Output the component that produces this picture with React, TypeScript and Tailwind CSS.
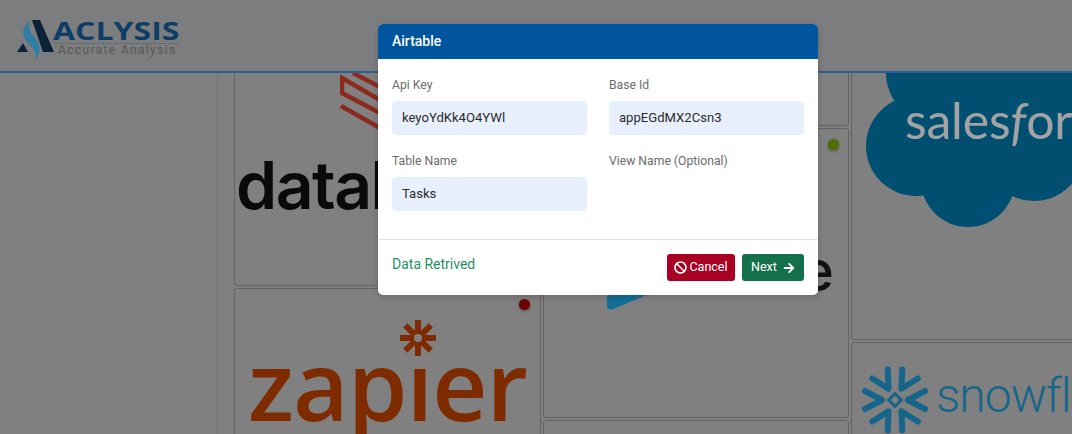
import { FaArrowRight, FaBan } from "react-icons/fa";

// Airtable connection dialog over the dimmed connector grid. Colours of the page
// behind the dialog are the already dimmed ones.

function Field({ label, value }: { label: string; value?: string }) {
  return (
    <div className="flex flex-col">
      <label className="h-[26px] text-[12.2px] leading-[20px] text-[#6c6c6c]">{label}</label>
      {value !== undefined && (
        <div className="flex h-[34px] items-center rounded-[4px] bg-[#e8f0fe] px-[10px] text-[13.1px] text-[#2b2b2b]">
          {value}
        </div>
      )}
    </div>
  );
}

function AclysisLogo() {
  return (
    <div className="flex items-start">
      <svg width="40" height="44" viewBox="0 0 40 44" className="-mr-[3px] shrink-0">
        <polygon points="1,34 12,34 7,25" fill="#0c2236" />
        <polygon points="16,2 24,2 38,34 27,34" fill="#0c2236" />
        <path d="M14,3 C7,8 5,15 10,22 C15,29 21,32 20,42 C24,36 25,30 22,24 C18,17 10,13 14,3 Z" fill="#2e7fa6" />
      </svg>
      <div className="flex w-[126px] flex-col">
        <span className="h-[25px] origin-left scale-x-[1.28] font-['Open_Sans',sans-serif] text-[25px] leading-[25px] font-bold text-[#0f3d66]">
          ACLYSIS
        </span>
        <span className="border-t border-[#6a6a6a] pl-[5px] font-['Roboto',sans-serif] text-[12px] leading-[13px] tracking-[1.35px] whitespace-nowrap text-[#585858]">
          Accurate Analysis
        </span>
      </div>
    </div>
  );
}

function Tile({ height, className = "", children }: { height: number; className?: string; children?: React.ReactNode }) {
  return (
    <div
      style={{ height }}
      className={`relative shrink-0 overflow-hidden rounded-[3px] border border-[#646464] ${className}`}
    >
      {children}
    </div>
  );
}

function Snowflake() {
  const arms = [30, 90, 150, 210, 270, 330];
  return (
    <svg width="68" height="68" viewBox="-34 -34 68 68" className="shrink-0">
      {arms.map((angle) => (
        <path
          key={angle}
          d="M-9,-30 L0,-13 L9,-30"
          transform={`rotate(${angle})`}
          stroke="#15668a"
          strokeWidth="6"
          strokeLinecap="round"
          strokeLinejoin="round"
          fill="none"
        />
      ))}
      <rect x="-4.5" y="-4.5" width="9" height="9" transform="rotate(45)" fill="none" stroke="#15668a" strokeWidth="3" />
    </svg>
  );
}

export default function App() {
  return (
    <div className="relative h-[434px] w-[1072px] overflow-hidden bg-[#808080] font-['Roboto',sans-serif]">
      <header className="flex h-[73px] items-start border-b-2 border-[#2a5f97] bg-[#7c7d7f] pt-[18px] pl-[16px]">
        <AclysisLogo />
      </header>

      <main className="flex h-[361px] overflow-hidden pl-[217px]">
        <div className="flex w-[17px] shrink-0 border-l border-[#747474]" />
        <div className="flex w-[309px] shrink-0 flex-col gap-[2px] pr-[2px]">
          <Tile height={213} className="rounded-t-none border-t-0">
            <svg width="60" height="60" viewBox="0 0 60 60" className="ml-[105px]" fill="none" stroke="#8c2a1e" strokeWidth="4.5">
              <path d="M13,0 L40,14" />
              <path d="M40,27 L2,5 L2,20 L40,40" />
              <path d="M1,33 L40,55" />
            </svg>
            <span className="absolute top-[72px] left-[1px] font-['Inter',sans-serif] text-[66px] leading-[80px] font-semibold tracking-[-1.5px] whitespace-nowrap text-[#0a0a0a]">
              datab
            </span>
          </Tile>
          <Tile height={160}>
            <div className="absolute top-[10px] right-[10px] h-[11px] w-[11px] rounded-full bg-[#6e0000] shadow-[0_1px_3px_rgba(0,0,0,0.4)]" />
            <div className="flex flex-col items-center pt-[31px]">
              <svg width="36" height="36" viewBox="-18 -18 36 36" className="ml-[60px]">
                {[0, 45, 90, 135].map((angle) => (
                  <rect key={angle} x="-3" y="-18" width="6" height="36" fill="#7f2b00" transform={`rotate(${angle})`} />
                ))}
                <circle r="4" fill="#808080" />
              </svg>
              <span className="-mt-[27px] font-['Open_Sans',sans-serif] text-[96px] leading-[110px] font-semibold tracking-[-1px] text-[#7f2b00]">
                zapıer
              </span>
            </div>
          </Tile>
        </div>

        <div className="-ml-[2px] flex w-[308px] shrink-0 flex-col gap-[2px] pl-[2px]">
          <Tile height={53} className="w-[306px] rounded-t-none border-t-0" />
          <Tile height={290} className="w-[306px]">
            <div className="absolute top-[10px] right-[9px] h-[11px] w-[11px] rounded-full bg-[#4f7000] shadow-[0_1px_3px_rgba(0,0,0,0.4)]" />
            <span className="absolute top-[109px] right-[14px] font-['Inter',sans-serif] text-[56px] leading-[66px] font-medium text-[#111]">
              e
            </span>
            <svg width="60" height="60" viewBox="0 0 60 60" className="absolute top-[123px] left-[61px]">
              <polygon points="2,45 2,56 6,58 44,42 30,10" fill="#146f96" />
            </svg>
          </Tile>
          <Tile height={30} className="w-[306px]" />
        </div>

        <div className="flex flex-1 flex-col gap-[2px] pl-[2px]">
          <Tile height={267} className="-mr-[4px] rounded-t-none border-t-0">
            <svg width="222" height="156" viewBox="0 0 222 156" className="absolute top-0 left-0">
              <g fill="#004f70">
                <circle cx="64" cy="73" r="50" />
                <circle cx="84" cy="0" r="50" />
                <circle cx="116" cy="107" r="47" />
                <circle cx="182" cy="78" r="50" />
                <rect x="70" y="0" width="152" height="110" />
              </g>
            </svg>
            <span className="absolute top-[12px] left-[53px] font-['Lato',sans-serif] text-[50px] leading-[70px] tracking-[-0.2px] whitespace-nowrap text-[#a3a3a3]">
              sales<em>f</em>or
            </span>
          </Tile>
          <Tile height={100} className="-mr-[4px] rounded-b-none">
            <div className="flex items-start gap-[7px] pt-[23px] pl-[9px]">
              <Snowflake />
              <span className="mt-[-3px] font-['Roboto',sans-serif] text-[48px] leading-[66px] font-light tracking-[-1px] whitespace-nowrap text-[#15668a]">
                snowfl
              </span>
            </div>
          </Tile>
        </div>
      </main>

      <div className="absolute top-[24px] left-[378px] w-[440px] overflow-hidden rounded-[5px] bg-white shadow-[0_2px_6px_rgba(0,0,0,0.2)]">
        <div className="flex h-[35px] items-center bg-[#00559f] px-[14px] text-[14px] font-medium text-white">Airtable</div>
        <div className="grid h-[181px] grid-cols-2 content-start gap-x-[22px] gap-y-[16px] border-b border-[#e3e3e3] px-[14px] pt-[16px]">
          <Field label="Api Key" value="keyoYdKk4O4YWl" />
          <Field label="Base Id" value="appEGdMX2Csn3" />
          <Field label="Table Name" value="Tasks" />
          <Field label="View Name (Optional)" />
        </div>
        <div className="flex h-[55px] items-start justify-between px-[14px] pt-[14px]">
          <span className="text-[14px] leading-[20px] text-[#1f9160]">Data Retrived</span>
          <div className="flex gap-[7px]">
            <button className="flex h-[27px] w-[68px] items-center justify-center gap-[2px] rounded-[3px] bg-[#a80023] text-[12.5px] text-white">
              <FaBan size={13} />
              Cancel
            </button>
            <button className="flex h-[27px] w-[62px] items-center justify-center gap-[6px] rounded-[3px] bg-[#13704a] text-[12.5px] text-white">
              Next
              <FaArrowRight size={12} />
            </button>
          </div>
        </div>
      </div>
    </div>
  );
}
